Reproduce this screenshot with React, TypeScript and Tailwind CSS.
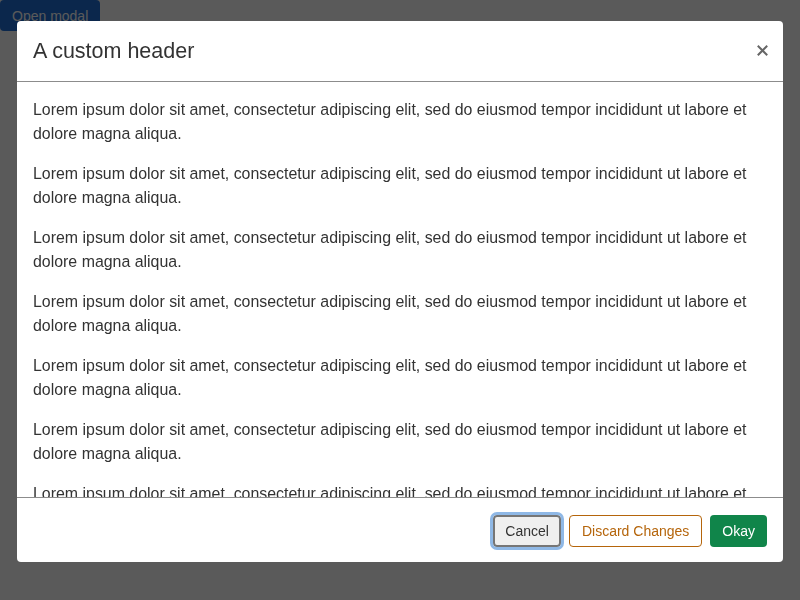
import React from 'react';

const LOREM =
  'Lorem ipsum dolor sit amet, consectetur adipiscing elit, sed do eiusmod tempor incididunt ut labore et dolore magna aliqua.';

const App: React.FC = () => {
  const paragraphs = Array.from({ length: 10 }, (_, i) => i);

  return (
    <div className="relative w-[800px] h-[600px] bg-white font-['Liberation_Sans',Arial,sans-serif] overflow-hidden">
      <button className="h-[31px] px-3 bg-[#1f6fd6] text-white text-sm rounded">Open modal</button>

      {/* overlay */}
      <div className="fixed inset-0 bg-[#000000a5] flex justify-center pt-[21px]">
        <div className="w-[766px] h-[541px] bg-white rounded flex flex-col overflow-hidden text-[#333]">
          <div className="h-[61px] shrink-0 flex items-center justify-between pl-4 pr-[15px] border-b border-[#8c8c8c]">
            <h2 className="text-[21.5px] leading-6 -mt-px">A custom header</h2>
            <button className="w-[11px] h-[11px] flex items-center justify-center text-[#666] -mt-[2px]">
              <svg width="11" height="11" viewBox="0 0 11 11" fill="none" stroke="currentColor" strokeWidth="2" strokeLinecap="square">
                <path d="M1.5 1.5L9.5 9.5M9.5 1.5L1.5 9.5" />
              </svg>
            </button>
          </div>

          <div className="flex-1 overflow-hidden px-4 pt-4">
            {paragraphs.map((i) => (
              <p key={i} className="text-[15.92px] leading-6 mb-4">
                {LOREM}
              </p>
            ))}
          </div>

          <div className="h-[65px] shrink-0 border-t border-[#8c8c8c] flex items-center justify-end gap-2 px-4 pt-[2px]">
            <button className="h-8 px-[10px] text-sm text-[#333] bg-[#efefef] border-2 border-[#767676] rounded outline-[3px] outline-solid outline-[#8fb8e6]">
              Cancel
            </button>
            <button className="h-8 px-3 text-sm text-[#b5650b] bg-white border border-[#b5650b] rounded">
              Discard Changes
            </button>
            <button className="h-8 px-3 text-sm text-white bg-[#10854a] rounded">Okay</button>
          </div>
        </div>
      </div>
    </div>
  );
};

export default App;
